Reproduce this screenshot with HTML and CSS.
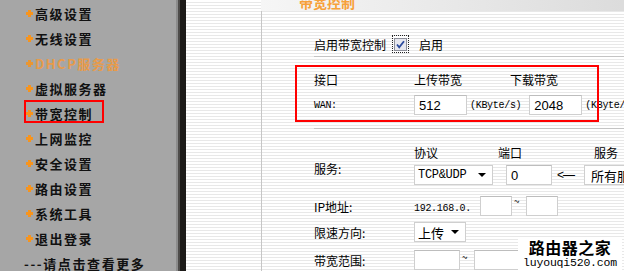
FILE: index.html
```html
<!DOCTYPE html>
<html lang="zh-CN">
<head>
    <meta charset="UTF-8">
    <title>带宽控制</title>
    <link rel="stylesheet" href="styles.css">
</head>
<body>
    <div class="sidebar">
        <div class="menu-item"><span class="plus"></span>高级设置</div>
        <div class="menu-item"><span class="plus"></span>无线设置</div>
        <div class="menu-item active"><span class="plus"></span>DHCP服务器</div>
        <div class="menu-item"><span class="plus"></span>虚拟服务器</div>
        <div class="menu-item"><span class="plus"></span>带宽控制</div>
        <div class="menu-item"><span class="plus"></span>上网监控</div>
        <div class="menu-item"><span class="plus"></span>安全设置</div>
        <div class="menu-item"><span class="plus"></span>路由设置</div>
        <div class="menu-item"><span class="plus"></span>系统工具</div>
        <div class="menu-item"><span class="plus"></span>退出登录</div>
        <div class="menu-item more">---请点击查看更多</div>
        <div class="mark mark-menu"></div>
    </div>
    <div class="divider"></div>

    <div class="right">
        <div class="gutter"></div>
        <div class="main">
            <div class="page-head"><span class="page-title">带宽控制</span></div>

            <div class="content">
                <div class="row enable-row">
                    <span>启用带宽控制</span>
                    <span class="check-focus">
                        <svg width="13" height="13" viewBox="0 0 13 13">
                            <rect x="0.5" y="0.5" width="12" height="12" fill="#e6e7ee" stroke="#8d8f99"/>
                            <path d="M3 6.5 L5.2 9.2 L10 3.2" fill="none" stroke="#2b4a9c" stroke-width="1.8"/>
                        </svg>
                    </span>
                    <span class="enable-text">启用</span>
                </div>

                <div class="row head-row bw-head">
                    <span class="label">接口</span>
                    <span class="col-up">上传带宽</span>
                    <span>下载带宽</span>
                </div>
                <div class="row wan-row">
                    <span class="label mono">WAN:</span>
                    <span class="field w53">512</span>
                    <span class="unit">(KByte/s)</span>
                    <span class="field w53 down">2048</span>
                    <span class="unit">(KByte/s)</span>
                </div>
                <div class="rule"></div>

                <div class="row head-row proto-head">
                    <span class="label"></span>
                    <span class="col-proto">协议</span>
                    <span class="col-port">端口</span>
                    <span>服务</span>
                </div>
                <div class="row service-row">
                    <span class="label top">服务:</span>
                    <span class="select w79"><span class="mono-val">TCP&amp;UDP</span><span class="arrow"></span></span>
                    <span class="field w46 port">0</span>
                    <span class="pointer">&lt;—</span>
                    <span class="select wide">所有服务</span>
                </div>
                <div class="row ip-row">
                    <span class="label">IP地址:</span>
                    <span class="ip mono">192.168.0.</span>
                    <span class="field w32"></span>
                    <span class="tilde">~</span>
                    <span class="field w32"></span>
                </div>
                <div class="row dir-row">
                    <span class="label">限速方向:</span>
                    <span class="select w52">上传<span class="arrow"></span></span>
                </div>
                <div class="row range-row">
                    <span class="label">带宽范围:</span>
                    <span class="field w46"></span>
                    <span class="tilde">~</span>
                    <span class="field w46"></span>
                    <span class="unit">(KByte/s)</span>
                </div>

                <div class="mark mark-box"></div>
            </div>
        </div>
    </div>

    <div class="watermark">
        <div class="wm-cn">路由器之家</div>
        <div class="wm-en">luyouqi520.com</div>
    </div>
</body>
</html>
```

FILE: styles.css
```css
* {
    box-sizing: border-box;
    margin: 0;
    padding: 0;
}

body {
    width: 624px;
    height: 271px;
    overflow: hidden;
    display: flex;
    position: relative;
    font-family: "Noto Sans CJK SC", "DejaVu Sans", sans-serif;
    color: #000;
}

/* left menu */
.sidebar {
    width: 176px;
    flex: none;
    background: #a6a6a6;
    padding-top: 1px;
    position: relative;
}

.menu-item {
    height: 25px;
    display: flex;
    align-items: center;
    padding-left: 26px;
    font-size: 13px;
    font-weight: 700;
    letter-spacing: 1.5px;
    color: #111;
    white-space: nowrap;
}

.menu-item.active {
    color: #f39a3a;
    opacity: 0.85;
}

.menu-item.more {
    padding-left: 24px;
    letter-spacing: 1.6px;
}

.plus {
    width: 7px;
    height: 7px;
    margin-right: 2px;
    flex: none;
    background:
        linear-gradient(#f7941d, #f7941d) center / 7px 3px no-repeat,
        linear-gradient(#f7941d, #f7941d) center / 3px 7px no-repeat;
}

.divider {
    width: 10px;
    flex: none;
    background: linear-gradient(to right, #8c8c8c 0 2px, #4e4c4a 2px 4px, #1c1a18 4px);
}

/* right side */
.right {
    flex: 1;
    display: flex;
    background: repeating-linear-gradient(to bottom, #ffffff 0 2px, #e8e8e8 2px 3px);
}

.gutter {
    width: 75px;
    flex: none;
}

.main {
    flex: 1;
    display: flex;
    flex-direction: column;
}

.page-head {
    height: 16px;
    background: linear-gradient(to right, #f6f6f6, #d9d9d9);
    padding-left: 38px;
    overflow: hidden;
}

.page-title {
    display: block;
    margin-top: -7px;
    font-size: 14px;
    font-weight: 700;
    color: #f7a13a;
    line-height: 18px;
}

.content {
    flex: 1;
    border-left: 1px solid #c6c6c6;
    padding-left: 52px;
    position: relative;
    font-size: 12px;
}

.row {
    display: flex;
    align-items: center;
    white-space: nowrap;
}

.label {
    width: 100px;
    flex: none;
}

.label.top {
    align-self: flex-start;
    margin-top: -3px;
}

.mono,
.unit {
    font-family: "Liberation Mono", monospace;
    font-size: 10px;
    letter-spacing: -0.3px;
}

.enable-row {
    margin-top: 21px;
    height: 25px;
    border-bottom: 1px solid #c4c4c4;
}

.check-focus {
    display: flex;
    align-items: center;
    justify-content: center;
    width: 17px;
    height: 18px;
    margin-left: 6px;
    border: 1px dotted #222;
}

.enable-text {
    margin-left: 10px;
}

.bw-head {
    margin-top: 12px;
    height: 20px;
}

.col-up {
    width: 96px;
}

.wan-row {
    margin-top: 3px;
    height: 26px;
}

.field {
    height: 20px;
    background: #fff;
    border: 1px solid #cfcfcf;
    border-top-color: #bdbdbd;
    padding-left: 4px;
    display: flex;
    align-items: center;
    font-family: "Liberation Sans", sans-serif;
    font-size: 13px;
    flex: none;
}

.w53 { width: 53px; }
.w46 { width: 46px; }
.w32 { width: 32px; }

.unit {
    margin-left: 3px;
}

.field.down {
    margin-left: 8px;
}

.rule {
    margin-top: 10px;
    border-top: 1px solid #c4c4c4;
}

.proto-head {
    margin-top: 13px;
    height: 20px;
}

.col-proto {
    width: 84px;
}

.col-port {
    width: 96px;
}

.service-row {
    margin-top: 1px;
    height: 24px;
}

.select {
    height: 20px;
    background: #fff;
    border: 1px solid #cfcfcf;
    display: flex;
    align-items: center;
    padding-left: 3px;
    flex: none;
    font-size: 13px;
}

.w79 { width: 79px; }
.w52 { width: 52px; }

.select.wide {
    width: 80px;
    margin-left: 10px;
    padding-left: 6px;
    overflow: hidden;
}

.mono-val {
    font-family: "Liberation Mono", monospace;
    font-size: 12px;
    letter-spacing: -0.3px;
}

.arrow {
    margin-left: auto;
    margin-right: 6px;
    width: 0;
    height: 0;
    border-left: 4px solid transparent;
    border-right: 4px solid transparent;
    border-top: 4px solid #000;
}

.port {
    margin-left: 13px;
}

.pointer {
    margin-left: 5px;
    font-family: "Liberation Sans", sans-serif;
    font-size: 12px;
    letter-spacing: -1px;
}

.ip-row {
    margin-top: 7px;
    height: 24px;
}

.ip {
    width: 66px;
    padding-top: 5px;
}

.tilde {
    width: 14px;
    align-self: flex-start;
    padding-left: 2px;
    font-size: 10px;
    line-height: 14px;
}

.dir-row {
    margin-top: 2px;
    height: 24px;
}

.range-row {
    margin-top: 3px;
    height: 24px;
    align-items: flex-start;
    padding-top: 3px;
}

.range-row .label {
    margin-top: 2px;
}

/* red annotation boxes */
.mark {
    position: absolute;
    border: 2px solid #f00;
    pointer-events: none;
}

.mark-menu {
    left: 24px;
    top: 100px;
    width: 80px;
    height: 23px;
}

.mark-box {
    left: 33px;
    top: 54px;
    width: 304px;
    height: 57px;
}

.watermark {
    position: absolute;
    right: 2px;
    bottom: 0;
    width: 104px;
    height: 34px;
    background: #fff;
    text-align: center;
    padding-top: 1px;
}

.wm-cn {
    font-size: 16px;
    font-weight: 700;
    line-height: 19px;
    letter-spacing: 0.5px;
}

.wm-en {
    font-family: "Liberation Mono", monospace;
    font-size: 11.5px;
    line-height: 12px;
    letter-spacing: -0.2px;
}
```
